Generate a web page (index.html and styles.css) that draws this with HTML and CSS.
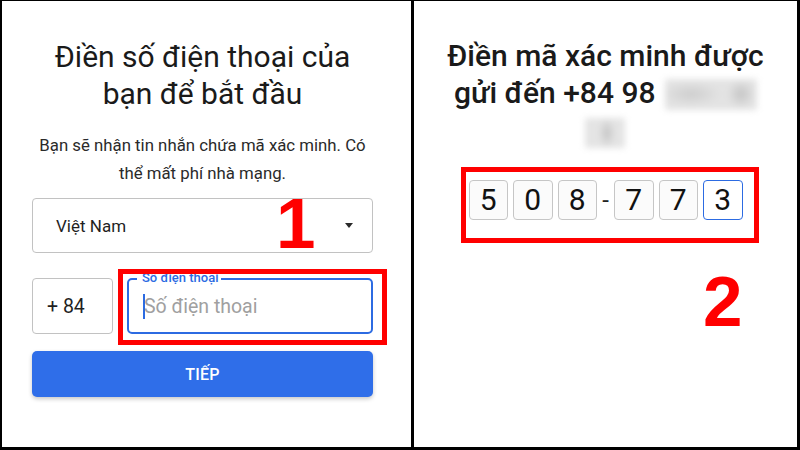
FILE: index.html
```html
<!DOCTYPE html>
<html lang="vi">
<head>
<meta charset="utf-8">
<link rel="stylesheet" href="styles.css">
</head>
<body>
<div class="frame">
  <section class="panel panel-left">
    <h1 class="title">Điền số điện thoại của<br>bạn để bắt đầu</h1>
    <p class="subtitle">Bạn sẽ nhận tin nhắn chứa mã xác minh. Có<br>thể mất phí nhà mạng.</p>
    <div class="select">
      <span class="select-text">Việt Nam</span>
      <span class="caret"></span>
    </div>
    <div class="phone-row">
      <div class="code-cell">+ 84</div>
      <div class="phone-field">
        <span class="float-label">Số điện thoại</span>
        <span class="cursor"></span>
        <span class="placeholder">Số điện thoại</span>
      </div>
    </div>
    <button class="btn">TIẾP</button>
    <div class="mark mark-phone"></div>
    <div class="step step-1">1</div>
  </section>
  <section class="panel panel-right">
    <h1 class="title title-strong">Điền mã xác minh được<br>gửi đến +84 98 <span class="blur blur-a"></span><br><span class="blur blur-b"></span></h1>
    <div class="otp">
      <span class="digit">5</span>
      <span class="digit">0</span>
      <span class="digit">8</span>
      <span class="dash">-</span>
      <span class="digit">7</span>
      <span class="digit">7</span>
      <span class="digit digit-active">3</span>
    </div>
    <div class="mark mark-otp"></div>
    <div class="step step-2">2</div>
  </section>
</div>
</body>
</html>
```
FILE: styles.css
```css
html, body {
  margin: 0;
  padding: 0;
}
body {
  width: 800px;
  height: 450px;
  background: #000;
  font-family: Roboto, "Noto Sans", sans-serif;
  overflow: hidden;
}
.frame {
  display: flex;
  gap: 3px;
  box-sizing: border-box;
  width: 800px;
  height: 450px;
  padding: 1px 3px 3px 2px;
}
.panel {
  position: relative;
  background: #fff;
  box-sizing: border-box;
}
.panel-left {
  width: 409px;
  padding: 0 38px 0 30px;
}
.panel-right {
  width: 383px;
  display: flex;
  flex-direction: column;
  align-items: center;
}
.title {
  margin: 36.5px 0 0;
  font-size: 30px;
  line-height: 37px;
  font-weight: 400;
  color: #1a1a1a;
  text-align: center;
  white-space: nowrap;
}
.title-strong {
  margin-top: 35.5px;
  font-weight: 500;
  color: #1a1a1a;
}
.subtitle {
  margin: 19.5px 0 0;
  font-size: 16.8px;
  line-height: 28px;
  color: #2a2a2a;
  text-align: center;
  white-space: nowrap;
}
.select {
  margin-top: 11px;
  height: 55px;
  box-sizing: border-box;
  border: 1px solid #c2c2c2;
  border-radius: 4px;
  display: flex;
  align-items: center;
  justify-content: space-between;
  padding: 0 19px 0 23px;
}
.select-text {
  font-size: 17px;
  color: #1f1f1f;
}
.caret {
  width: 0;
  height: 0;
  border-left: 4px solid transparent;
  border-right: 4px solid transparent;
  border-top: 5px solid #2a2a2a;
}
.phone-row {
  margin-top: 25px;
  display: flex;
  gap: 14px;
  height: 56px;
}
.code-cell {
  width: 81px;
  box-sizing: border-box;
  border: 1px solid #c2c2c2;
  border-radius: 4px;
  display: flex;
  align-items: center;
  padding-left: 14px;
  font-size: 19.5px;
  color: #1f1f1f;
}
.phone-field {
  position: relative;
  flex: 1;
  box-sizing: border-box;
  border: 2px solid #2c6be2;
  border-radius: 5px;
  display: flex;
  align-items: center;
  padding-left: 14px;
}
.float-label {
  position: absolute;
  left: 8px;
  top: -10px;
  padding: 0 3px 0 5px;
  background: #fff;
  font-size: 13px;
  font-weight: 500;
  line-height: 16px;
  color: #2c6be2;
}
.cursor {
  width: 2px;
  height: 25px;
  background: #2c6be2;
  margin-right: -1px;
}
.placeholder {
  font-size: 19.5px;
  color: #a0a0a0;
}
.btn {
  display: block;
  width: 100%;
  margin-top: 17px;
  height: 46px;
  border: none;
  border-radius: 5px;
  background: #2f6ee9;
  color: #fff;
  font-family: Roboto, "Noto Sans", sans-serif;
  font-size: 16px;
  font-weight: 500;
  letter-spacing: 0.3px;
  box-shadow: 0 2px 4px rgba(0, 0, 0, 0.22);
}
.blur {
  display: inline-block;
  vertical-align: middle;
  filter: blur(3px);
  border-radius: 2px;
}
.blur-a {
  width: 92px;
  height: 31px;
  margin-left: 2px;
  background:
    radial-gradient(ellipse 14px 14px at 76px 15px, #c4c4c4, rgba(210,210,210,0) 100%),
    radial-gradient(ellipse 30px 12px at 26px 15px, #cdcdcd, rgba(210,210,210,0) 100%),
    #e3e3e3;
}
.blur-b {
  width: 40px;
  height: 30px;
  margin-top: 2px;
  background:
    radial-gradient(ellipse 8px 15px at 22px 15px, #c2c2c2, rgba(210,210,210,0) 100%),
    #e4e4e4;
}
.otp {
  margin-top: 32px;
  display: flex;
  align-items: center;
  gap: 5px;
}
.digit {
  width: 39.5px;
  height: 40px;
  box-sizing: border-box;
  border: 1px solid #c6c6c6;
  border-radius: 4px;
  background: #fbfbfb;
  display: flex;
  align-items: center;
  justify-content: center;
  font-size: 30px;
  color: #111;
}
.digit-active {
  border: 1.5px solid #2c6be2;
  background: #fff;
}
.dash {
  width: 7px;
  font-size: 24px;
  color: #222;
  text-align: center;
  line-height: 40px;
}
.mark {
  position: absolute;
  box-sizing: border-box;
  border: 5px solid #ff0000;
}
.mark-phone {
  left: 116px;
  top: 268px;
  width: 269px;
  height: 76px;
}
.mark-otp {
  left: 47px;
  top: 166px;
  width: 298px;
  height: 76px;
}
.step {
  position: absolute;
  font-family: "Liberation Sans", Arial, sans-serif;
  font-weight: 700;
  font-size: 71px;
  line-height: 71px;
  color: #ff0000;
}
.step-1 {
  left: 274px;
  top: 187px;
}
.step-2 {
  left: 289px;
  top: 265px;
}
```
